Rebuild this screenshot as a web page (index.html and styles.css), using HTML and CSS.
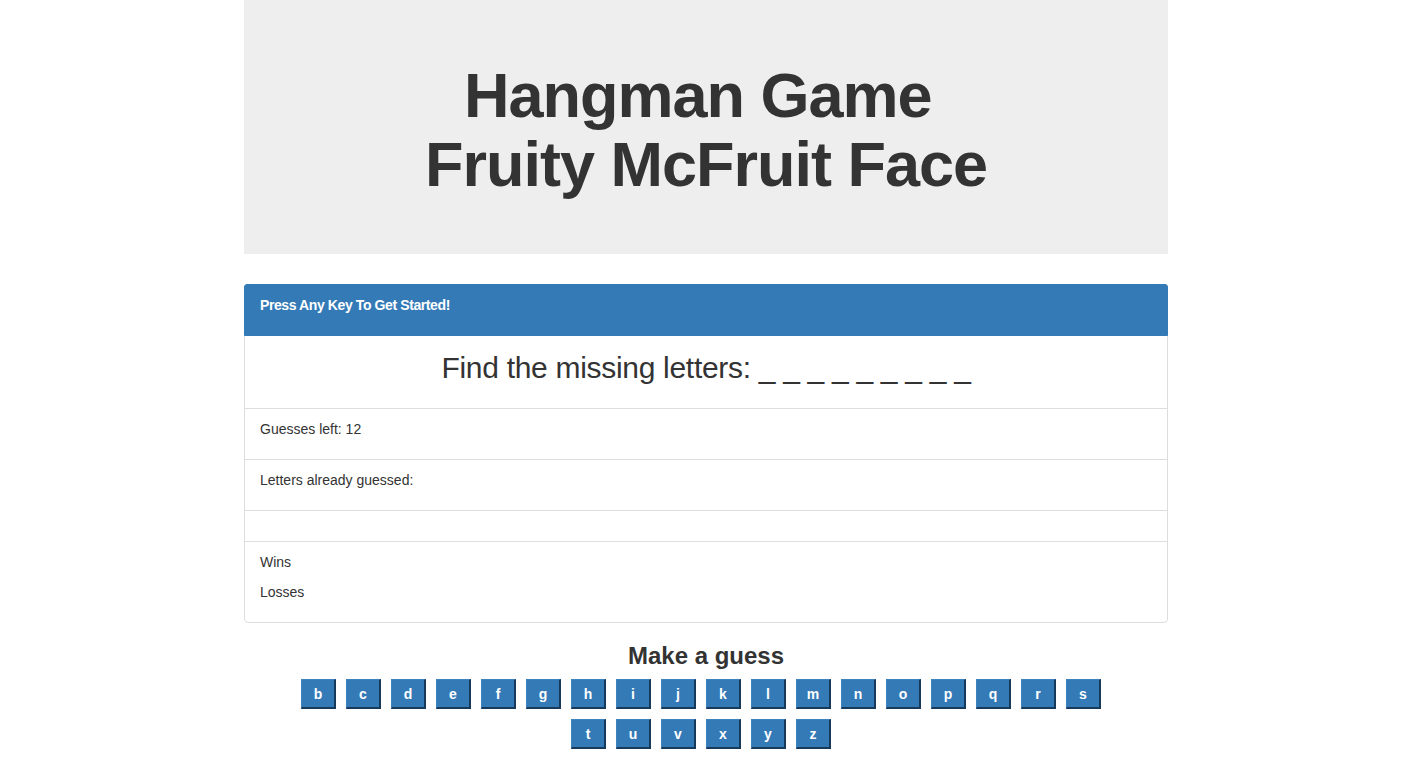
FILE: index.html
```html
<!DOCTYPE html>
<html>
<head>
<meta charset="utf-8">
<title>Hangman Game</title>
<link rel="stylesheet" href="styles.css">
</head>
<body>
<div class="container">
  <div class="jumbotron">
    <h1 class="title">Hangman Game&nbsp;<br>Fruity McFruit Face</h1>
  </div>

  <div class="panel">
    <div class="panel-heading">
      <p class="panel-text">Press Any Key To Get Started!</p>
    </div>
    <ul class="list-group">
      <li class="list-item item-word">
        <h2 class="word">Find the missing letters: _ _ _ _ _ _ _ _ _</h2>
      </li>
      <li class="list-item">
        <p class="line">Guesses left: 12</p>
      </li>
      <li class="list-item">
        <p class="line">Letters already guessed: </p>
      </li>
      <li class="list-item">
        <p class="line empty"></p>
      </li>
      <li class="list-item">
        <p class="line">Wins</p>
        <p class="line">Losses</p>
      </li>
    </ul>
  </div>

  <h3 class="guess-title">Make a guess</h3>
  <div class="letters">
    <button class="letter">b</button>
    <button class="letter">c</button>
    <button class="letter">d</button>
    <button class="letter">e</button>
    <button class="letter">f</button>
    <button class="letter">g</button>
    <button class="letter">h</button>
    <button class="letter">i</button>
    <button class="letter">j</button>
    <button class="letter">k</button>
    <button class="letter">l</button>
    <button class="letter">m</button>
    <button class="letter">n</button>
    <button class="letter">o</button>
    <button class="letter">p</button>
    <button class="letter">q</button>
    <button class="letter">r</button>
    <button class="letter">s</button>
    <button class="letter">t</button>
    <button class="letter">u</button>
    <button class="letter">v</button>
    <button class="letter">x</button>
    <button class="letter">y</button>
    <button class="letter">z</button>
  </div>
</div>
</body>
</html>
```

FILE: styles.css
```css
* {
  box-sizing: border-box;
}

html, body {
  margin: 0;
  padding: 0;
  background: #fff;
}

body {
  font-family: "Liberation Sans", Arial, sans-serif;
  font-size: 14px;
  line-height: 20px;
  color: #333;
}

.container {
  width: 924px;
  margin: 0 auto;
}

.jumbotron {
  background: #eee;
  padding: 61px 0 54px;
  margin-bottom: 30px;
  text-align: center;
}

.title {
  margin: 0;
  font-size: 63px;
  line-height: 69.3px;
  font-weight: bold;
  letter-spacing: -1px;
  color: #333;
}

.panel {
  border: 1px solid #ddd;
  border-radius: 4px;
  margin-bottom: 20px;
  background: #fff;
}

.panel-heading {
  background: #337ab7;
  color: #fff;
  margin: -1px -1px 0;
  border: 1px solid #337ab7;
  border-radius: 3px 3px 0 0;
  padding: 10px 15px 10px;
}

.panel-text {
  margin: 0 0 10px;
  font-weight: bold;
  font-size: 14px;
  line-height: 20px;
  letter-spacing: -0.4px;
}

.list-group {
  list-style: none;
  margin: 0;
  padding: 0;
}

.list-item {
  padding: 10px 15px;
  border-top: 1px solid #ddd;
}

.list-item:first-child {
  border-top: 0;
}

.item-word {
  padding: 15px 15px 24px;
  text-align: center;
}

.word {
  margin: 0;
  font-size: 30px;
  line-height: 33px;
  font-weight: 500;
  letter-spacing: -0.3px;
  color: #333;
}

.line {
  margin: 0 0 10px;
}

.empty {
  height: 0;
}

.guess-title {
  margin: 0 0 10px;
  font-size: 24px;
  line-height: 26.4px;
  font-weight: bold;
  text-align: center;
  color: #333;
}

.letters {
  width: 820px;
  margin: 0 auto;
  display: flex;
  flex-wrap: wrap;
  justify-content: center;
  row-gap: 10px;
}

.letter {
  width: 35px;
  height: 30px;
  margin: 0 10px 0 0;
  padding: 0;
  background: #337ab7;
  color: #fff;
  font-family: "Liberation Sans", Arial, sans-serif;
  font-size: 14px;
  font-weight: bold;
  border-style: solid;
  border-width: 1px 2px 2px 1px;
  border-color: #3d83c0 #173a5a #173a5a #3d83c0;
  cursor: pointer;
}
```
